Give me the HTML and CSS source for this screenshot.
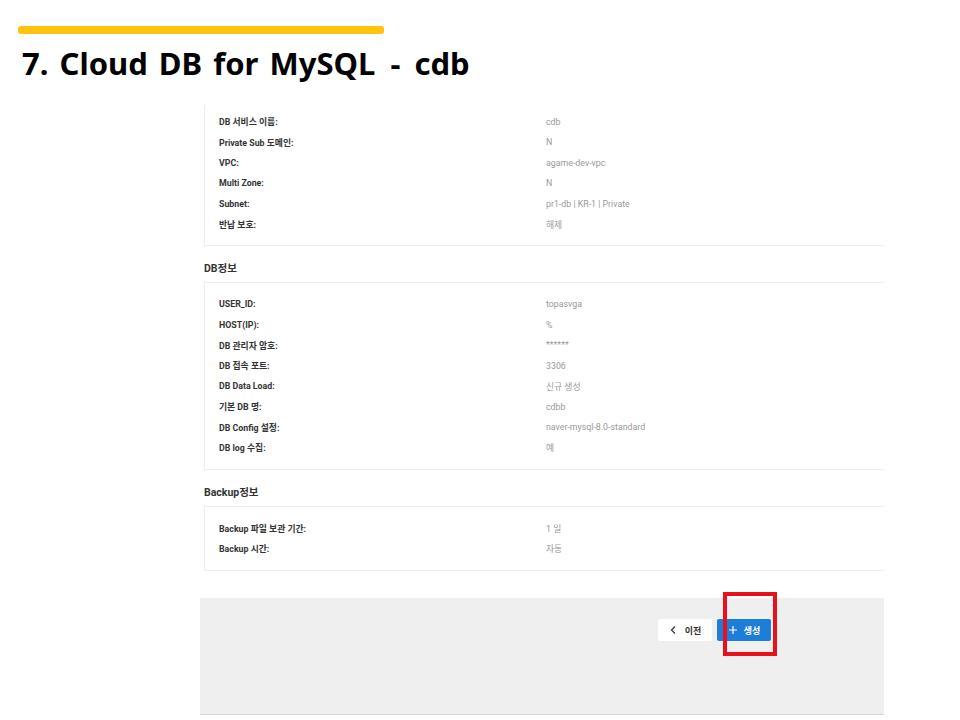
FILE: index.html
```html
<!DOCTYPE html>
<html lang="ko">
<head>
<meta charset="UTF-8">
<title>7. Cloud DB for MySQL - cdb</title>
<link rel="stylesheet" href="styles.css">
</head>
<body>

<div class="accent-bar"></div>
<h1 class="slide-title">7. Cloud DB for MySQL <span class="title-dash">-</span> cdb</h1>

<div class="screen">
  <div class="content">
    <div class="card card-first">
      <div class="row"><span class="row-label">DB 서비스 이름:</span><span class="row-value">cdb</span></div>
      <div class="row"><span class="row-label">Private Sub 도메인:</span><span class="row-value">N</span></div>
      <div class="row"><span class="row-label">VPC:</span><span class="row-value">agame-dev-vpc</span></div>
      <div class="row"><span class="row-label">Multi Zone:</span><span class="row-value">N</span></div>
      <div class="row"><span class="row-label">Subnet:</span><span class="row-value">pr1-db | KR-1 | Private</span></div>
      <div class="row"><span class="row-label">반납 보호:</span><span class="row-value">해제</span></div>
    </div>

    <h2 class="section-title">DB정보</h2>
    <div class="card">
      <div class="row"><span class="row-label">USER_ID:</span><span class="row-value">topasvga</span></div>
      <div class="row"><span class="row-label">HOST(IP):</span><span class="row-value">%</span></div>
      <div class="row"><span class="row-label">DB 관리자 암호:</span><span class="row-value">******</span></div>
      <div class="row"><span class="row-label">DB 접속 포트:</span><span class="row-value">3306</span></div>
      <div class="row"><span class="row-label">DB Data Load:</span><span class="row-value">신규 생성</span></div>
      <div class="row"><span class="row-label">기본 DB 명:</span><span class="row-value">cdbb</span></div>
      <div class="row"><span class="row-label">DB Config 설정:</span><span class="row-value">naver-mysql-8.0-standard</span></div>
      <div class="row"><span class="row-label">DB log 수집:</span><span class="row-value">예</span></div>
    </div>

    <h2 class="section-title">Backup정보</h2>
    <div class="card">
      <div class="row"><span class="row-label">Backup 파일 보관 기간:</span><span class="row-value">1 일</span></div>
      <div class="row"><span class="row-label">Backup 시간:</span><span class="row-value">자동</span></div>
    </div>
  </div>

  <div class="footer">
    <button class="btn btn-prev">
      <svg class="btn-icon" viewBox="0 0 10 10"><path d="M6 1.5 2.5 5 6 8.500" fill="none" stroke="#333" stroke-width="1.2"/></svg>
      이전
    </button>
    <button class="btn btn-create">
      <svg class="btn-icon" viewBox="0 0 10 10"><path d="M5 1v8M1 5h8" fill="none" stroke="#fff" stroke-width="1.2"/></svg>
      생성
    </button>
  </div>
</div>

<div class="highlight"></div>

</body>
</html>
```

FILE: styles.css
```css
* {
  box-sizing: border-box;
}
html, body {
  height: 720px;
}
body {
  position: relative;
  margin: 0;
  overflow: hidden;
  background: #fff;
  font-family: Roboto, "Noto Sans CJK KR", sans-serif;
}
.accent-bar {
  width: 366px;
  height: 8px;
  margin: 26px 0 0 18px;
  border-radius: 3px;
  background: #ffc20e;
}
.slide-title {
  height: 71px;
  margin: 0 0 0 22px;
  color: #000;
  font-family: "Noto Sans", "Noto Sans CJK KR", sans-serif;
  font-size: 31px;
  font-weight: 700;
  line-height: 58px;
  word-spacing: 3px;
  white-space: nowrap;
}
.title-dash {
  margin: 0 3px 0 4px;
}
.screen {
  width: 684px;
  height: 615px;
  margin-left: 200px;
  overflow: hidden;
}
.content {
  height: 493px;
  padding-left: 4px;
}
.card {
  padding: 11px 0;
  border: 1px solid #ececec;
  border-right: 0;
  border-radius: 2px 0 0 2px;
}
.card-first {
  padding: 6.5px 0 10.5px;
  border-top: 0;
}
.row {
  display: flex;
  height: 20.5px;
  padding-left: 14px;
  align-items: center;
  font-size: 8.8px;
}
.row-label {
  width: 327px;
  color: #333;
  font-weight: 700;
}
.row-value {
  color: #999;
}
.section-title {
  height: 36px;
  margin: 0;
  color: #333;
  font-size: 10.5px;
  font-weight: 700;
  line-height: 46px;
}
.footer {
  display: flex;
  height: 117px;
  padding: 21px 113px 0 0;
  justify-content: flex-end;
  gap: 5px;
  border-bottom: 1px solid #d4d4d4;
  background: #efefef;
}
.btn {
  display: flex;
  width: 54px;
  height: 22px;
  padding: 0;
  align-items: center;
  justify-content: center;
  gap: 6px;
  border: 0;
  border-radius: 2px;
  font-family: inherit;
  font-size: 9px;
  font-weight: 700;
}
.btn-prev {
  background: #fff;
  color: #333;
}
.btn-create {
  background: #1c7ed6;
  color: #fff;
}
.btn-icon {
  width: 10px;
  height: 10px;
}
/* red box drawn over the screenshot */
.highlight {
  position: absolute;
  left: 723px;
  top: 592px;
  width: 54px;
  height: 64px;
  border: 4px solid #e8101a;
}
```
